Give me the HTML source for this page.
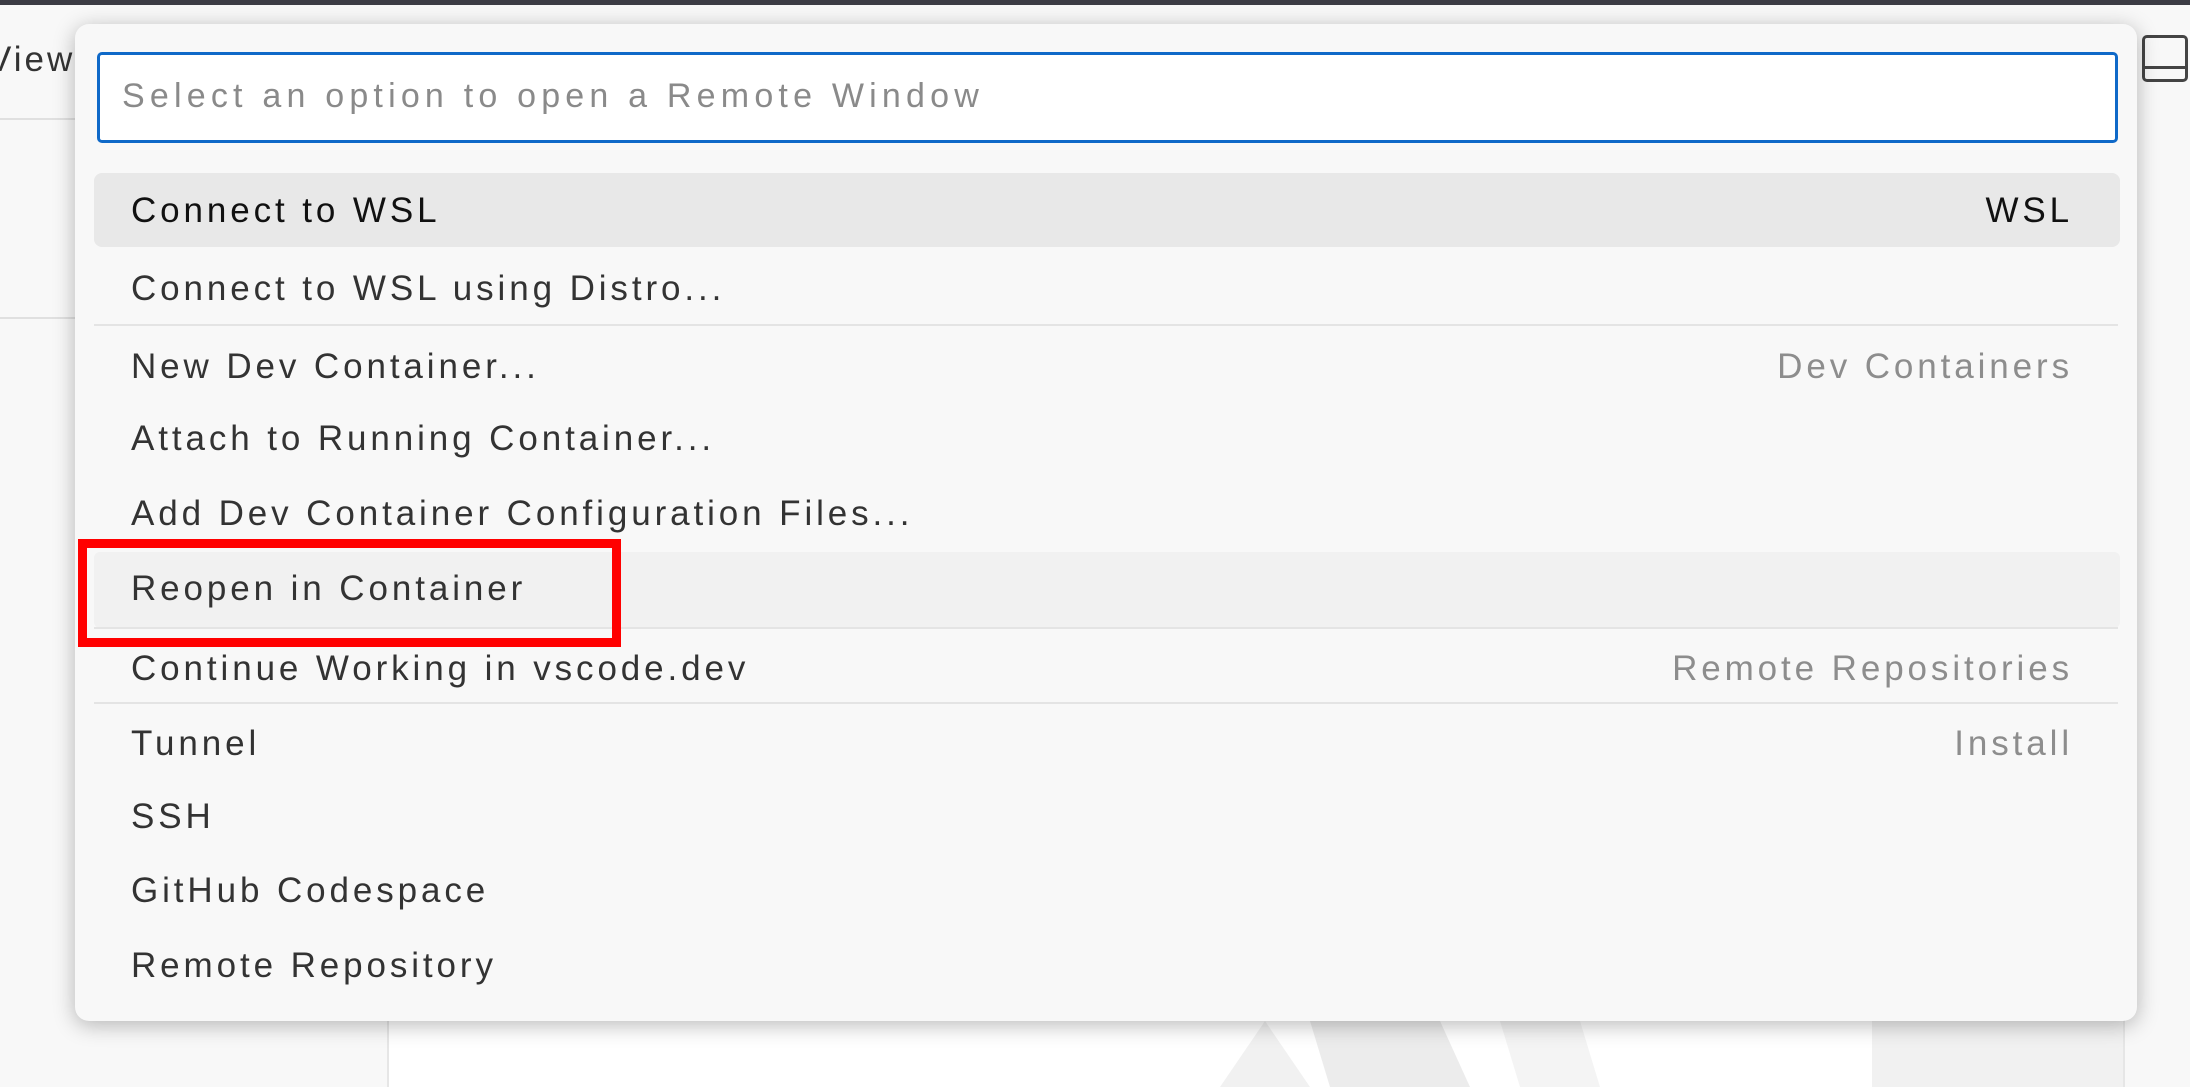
<!DOCTYPE html>
<html><head><meta charset="utf-8"><style>
*{margin:0;padding:0;box-sizing:border-box}
body{width:2190px;height:1087px;overflow:hidden;background:#f8f8f8;position:relative;font-family:"Liberation Sans",sans-serif;}
.abs{position:absolute}
.panel{left:75px;top:24px;width:2062px;height:997px;background:#f8f8f8;border-radius:14px;box-shadow:0 4px 22px rgba(0,0,0,.28);}
.input{left:97px;top:52px;width:2021px;height:91px;background:#fff;border:3px solid #0f69c8;border-radius:5px;font-size:34px;letter-spacing:5.2px;color:#8a8a8a;padding:22px 0 0 22px}
.row{position:absolute;left:131px;right:117px;font-size:35px;letter-spacing:3.9px;color:#333;height:40px;line-height:40px}
.row span{position:absolute;right:0;top:0;color:#8d8d8d}
.sep{position:absolute;left:94px;width:2024px;height:2px;background:#e4e4e4}
</style></head><body>
<div class="abs" style="left:0;top:0;width:2190px;height:5px;background:#3c3c44"></div>
<div class="abs" style="left:0;top:118px;width:80px;height:2px;background:#e0e0e0"></div>
<div class="abs" style="left:0;top:317px;width:80px;height:2px;background:#e0e0e0"></div>
<div class="abs" style="left:-12px;top:40px;font-size:35px;letter-spacing:3px;color:#333">View</div>
<div class="abs" style="left:387px;top:1021px;width:1736px;height:66px;background:#fff;border-left:2px solid #e6e6e6"></div>
<svg class="abs" style="left:1180px;top:1021px" width="700" height="66"><polygon points="40,66 85,0 130,66" fill="#f1f1f1"/><polygon points="130,0 260,0 290,66 150,66" fill="#ececec"/><polygon points="320,0 400,0 420,66 340,66" fill="#f4f4f4"/></svg>
<div class="abs" style="left:1872px;top:1021px;width:251px;height:66px;background:#f1f1f1"></div>
<div class="abs" style="left:2123px;top:90px;width:2px;height:997px;background:#e6e6e6"></div>
<div class="abs" style="left:2142px;top:35px;width:46px;height:47px;border:3px solid #444;border-radius:5px"></div>
<div class="abs" style="left:2142px;top:66px;width:46px;height:3px;background:#444"></div>
<div class="abs panel"></div>
<div class="abs input">Select an option to open a Remote Window</div>
<div class="abs" style="left:94px;top:173px;width:2026px;height:74px;background:#e8e8e8;border-radius:8px"></div>
<div class="abs" style="left:94px;top:552px;width:2026px;height:76px;background:#f1f1f1;border-radius:6px"></div>
<div class="sep" style="top:324px"></div>
<div class="sep" style="top:627px"></div>
<div class="sep" style="top:702px"></div>
<div class="row" style="top:191px;color:#111">Connect to WSL<span style="color:#111">WSL</span></div>
<div class="row" style="top:269px">Connect to WSL using Distro...</div>
<div class="row" style="top:347px">New Dev Container...<span>Dev Containers</span></div>
<div class="row" style="top:419px">Attach to Running Container...</div>
<div class="row" style="top:494px">Add Dev Container Configuration Files...</div>
<div class="row" style="top:569px">Reopen in Container</div>
<div class="row" style="top:649px">Continue Working in vscode.dev<span>Remote Repositories</span></div>
<div class="row" style="top:724px">Tunnel<span>Install</span></div>
<div class="row" style="top:797px">SSH</div>
<div class="row" style="top:871px">GitHub Codespace</div>
<div class="row" style="top:946px">Remote Repository</div>
<div class="abs" style="left:78px;top:539px;width:543px;height:108px;border:9px solid #ff0000"></div>
</body></html>
